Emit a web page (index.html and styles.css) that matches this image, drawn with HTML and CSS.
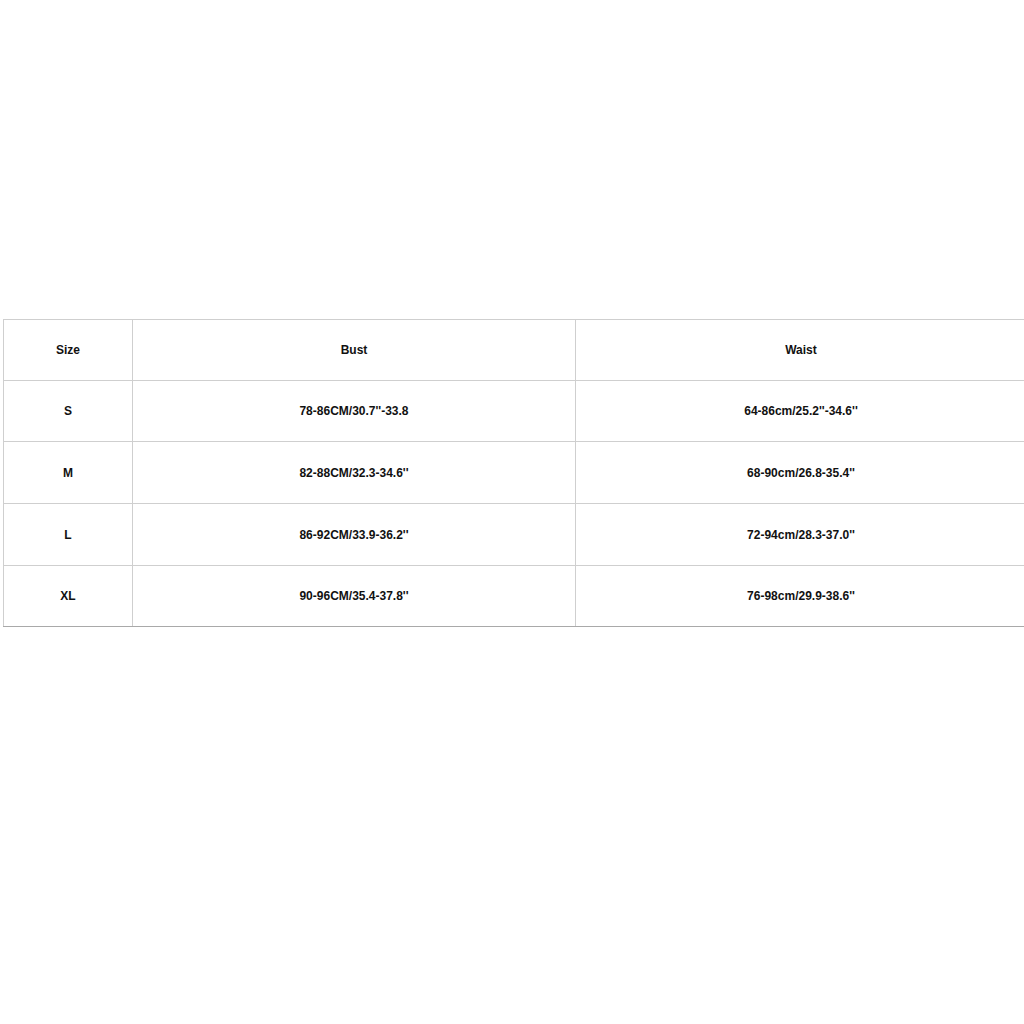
FILE: index.html
```html
<!DOCTYPE html>
<html>
<head>
<meta charset="utf-8">
<link rel="stylesheet" href="styles.css">
</head>
<body>
<div class="page">
  <table class="sizes">
    <colgroup>
      <col class="c1"><col class="c2"><col class="c3">
    </colgroup>
    <tr class="r"><td>Size</td><td>Bust</td><td>Waist</td></tr>
    <tr class="r"><td>S</td><td>78-86CM/30.7''-33.8</td><td>64-86cm/25.2''-34.6''</td></tr>
    <tr class="r tall"><td>M</td><td>82-88CM/32.3-34.6''</td><td>68-90cm/26.8-35.4''</td></tr>
    <tr class="r tall"><td>L</td><td>86-92CM/33.9-36.2''</td><td>72-94cm/28.3-37.0''</td></tr>
    <tr class="r last"><td>XL</td><td>90-96CM/35.4-37.8''</td><td>76-98cm/29.9-38.6''</td></tr>
  </table>
</div>
</body>
</html>
```
FILE: styles.css
```css
html, body {
  margin: 0;
  padding: 0;
  background: #fff;
}
.page {
  width: 1024px;
  height: 1024px;
  overflow: hidden;
  padding: 319px 0 0 3px;
  box-sizing: border-box;
}
.sizes {
  border-collapse: collapse;
  table-layout: fixed;
  width: 1023px;
  font-family: "Liberation Sans", Arial, sans-serif;
  font-weight: bold;
  font-size: 12px;
  color: #111;
}
.c1 { width: 129px; }
.c2 { width: 443px; }
.c3 { width: 451px; }
.sizes td {
  border: 1px solid #cfcfcf;
  text-align: center;
  vertical-align: middle;
  padding: 0;
  height: 60px;
}
.sizes .tall td { height: 61px; }
.sizes .last td { border-bottom-color: #a9a9a9; }
```
